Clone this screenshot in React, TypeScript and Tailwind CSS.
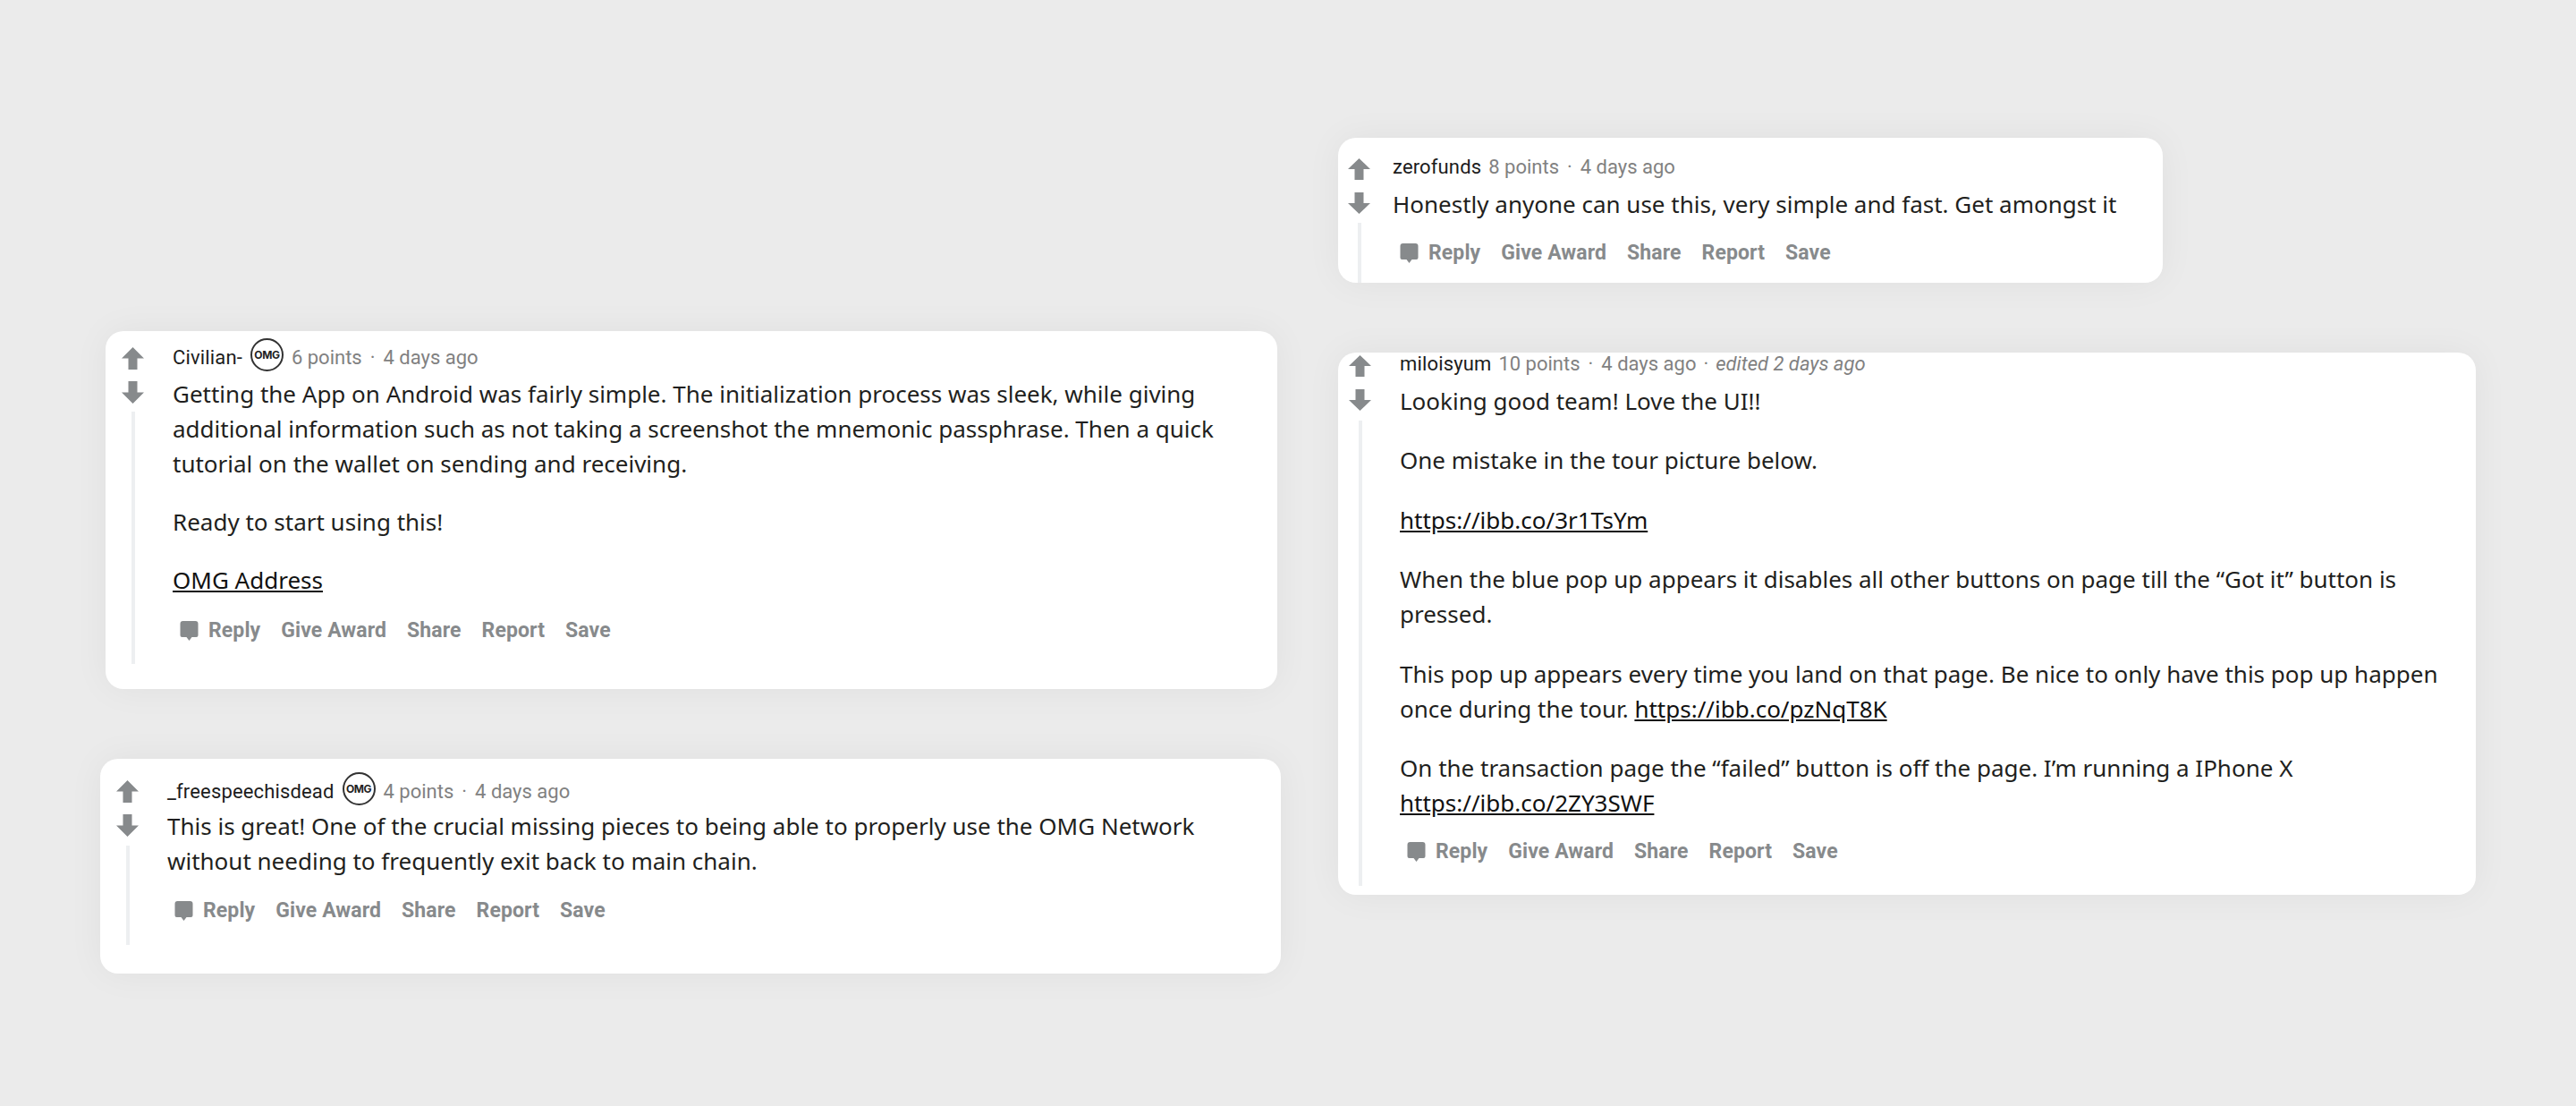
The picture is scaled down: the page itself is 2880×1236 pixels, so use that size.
const body = "font-['Noto_Sans',sans-serif] text-[26px] leading-[39px] text-[#1f1f20]";
const meta = "font-['Roboto',sans-serif] text-[22px] leading-[26px]";
const card = "flex bg-white rounded-[20px] shadow-[0_0_40px_rgba(0,0,0,0.05)]";

function Arrow({ down = false, className = "" }: { down?: boolean; className?: string }) {
  return (
    <svg viewBox="0 0 20 24" preserveAspectRatio="none" className={className}>
      <path d={down ? "M6 0h8v12h6L10 24 0 12h6z" : "M10 0l10 12h-6v12H6V12H0z"} fill="#878a8c" />
    </svg>
  );
}

function Votes({ gap, lineTop, top, h }: { gap: string; lineTop: string; top: string; h: string }) {
  return (
    <div className={`flex flex-col items-center shrink-0 self-stretch w-[25px] ${top}`}>
      <Arrow className={`w-[25px] ${h} shrink-0`} />
      <Arrow down className={`w-[25px] ${h} shrink-0 ${gap}`} />
      <div className={`w-[4px] grow bg-[#edeff1] ${lineTop}`} />
    </div>
  );
}

function Actions({ className = "" }: { className?: string }) {
  const items = ["Give Award", "Share", "Report", "Save"];
  return (
    <div className={`flex items-center gap-[23px] font-['Roboto',sans-serif] font-bold text-[23px] tracking-[0.1px] leading-[26px] text-[#878a8c] ${className}`}>
      <span className="flex items-center gap-[11px]">
        <svg viewBox="0 0 20 22" className="w-[21px] h-[22px]">
          <path d="M3 0h14a3 3 0 0 1 3 3v13a2 2 0 0 1-2 2h-5l-3 4-3-4H2a2 2 0 0 1-2-2V3a3 3 0 0 1 3-3z" fill="#878a8c" />
        </svg>
        Reply
      </span>
      {items.map((t) => (
        <span key={t}>{t}</span>
      ))}
    </div>
  );
}

function Omg() {
  return (
    <span className="inline-flex shrink-0 items-center justify-center w-[37px] h-[37px] rounded-full border-2 border-[#333] bg-white font-['Inter',sans-serif] font-bold text-[12px] tracking-[-0.4px] text-[#222] mx-[9px] -mt-[7px]">
      OMG
    </span>
  );
}

function Meta({ name, pts, badge = false, edited = false }: { name: string; pts: string; badge?: boolean; edited?: boolean }) {
  return (
    <div className={`flex items-center h-[26px] whitespace-pre ${meta}`}>
      <span className="text-[#1c1c1c] tracking-[0.15px]">{name}</span>
      {badge ? <Omg /> : <span className="w-[8px]" />}
      <span className="text-[#818181]">
        {pts}
        <span className="mx-[9px]">·</span>4 days ago
      </span>
      {edited && (
        <span className="text-[#818181]">
          <span className="mx-[8px]">·</span>
          <em>edited 2 days ago</em>
        </span>
      )}
    </div>
  );
}

const A = ({ children }: { children: string }) => <a className="underline text-[#111]">{children}</a>;

export default function App() {
  return (
    <div className="w-[2880px] h-[1236px] overflow-hidden bg-[#ebebeb] flex">
      <div className="w-[1496px] shrink-0 flex flex-col pt-[370px]">
        <div className={`${card} ml-[118px] w-[1310px] h-[400px] pl-[18px] pt-[17px] pb-[28px]`}>
          <Votes top="mt-[1px]" h="h-[25px]" gap="mt-[13px]" lineTop="mt-[9px]" />
          <div className="ml-[32px] w-[1190px]">
            <Meta name="Civilian-" pts="6 points" badge />
            <div className={`${body} mt-[8px]`}>
              <p>Getting the App on Android was fairly simple. The initialization process was sleek, while giving additional information such as not taking a screenshot the mnemonic passphrase. Then a quick tutorial on the wallet on sending and receiving.</p>
              <p className="mt-[26px]">Ready to start using this!</p>
              <p className="mt-[26px]"><A>OMG Address</A></p>
            </div>
            <Actions className="mt-[24px] ml-[8px]" />
          </div>
        </div>
        <div className={`${card} ml-[112px] mt-[78px] w-[1320px] h-[240px] pl-[18px] pt-[24px] pb-[32px]`}>
          <Votes top="mt-0" h="h-[25px]" gap="mt-[13px]" lineTop="mt-[10px]" />
          <div className="ml-[32px] w-[1190px]">
            <Meta name="_freespeechisdead" pts="4 points" badge />
            <div className={`${body} mt-[6px]`}>
              <p>This is great! One of the crucial missing pieces to being able to properly use the OMG Network without needing to frequently exit back to main chain.</p>
            </div>
            <Actions className="mt-[23px] ml-[8px]" />
          </div>
        </div>
      </div>
      <div className="flex flex-col pt-[154px]">
        <div className={`${card} w-[922px] h-[162px] pl-[11px] pt-[20px]`}>
          <Votes top="mt-[3px]" h="h-[24px]" gap="mt-[14px]" lineTop="mt-[10px]" />
          <div className="ml-[25px] w-[860px]">
            <Meta name="zerofunds" pts="8 points" />
            <div className={`${body} mt-[9px]`}>
              <p>Honestly anyone can use this, very simple and fast. Get amongst it</p>
            </div>
            <Actions className="mt-[22px] ml-[8px]" />
          </div>
        </div>
        <div className={`${card} mt-[78px] w-[1272px] h-[606px] pl-[12px] pb-[10px]`}>
          <Votes top="mt-[3px]" h="h-[24px]" gap="mt-[14px]" lineTop="mt-[11px]" />
          <div className="ml-[32px] w-[1200px]">
            <Meta name="miloisyum" pts="10 points" edited />
            <div className={`${body} mt-[9px]`}>
              <p>Looking good team! Love the UI!!</p>
              <p className="mt-[27.4px]">One mistake in the tour picture below.</p>
              <p className="mt-[27.4px]"><A>https://ibb.co/3r1TsYm</A></p>
              <p className="mt-[27.4px]">When the blue pop up appears it disables all other buttons on page till the “Got it” button is pressed.</p>
              <p className="mt-[27.4px]">This pop up appears every time you land on that page. Be nice to only have this pop up happen once during the tour. <A>https://ibb.co/pzNqT8K</A></p>
              <p className="mt-[27.4px]">On the transaction page the “failed” button is off the page. I’m running a IPhone X <A>https://ibb.co/2ZY3SWF</A></p>
            </div>
            <Actions className="mt-[22px] ml-[8px]" />
          </div>
        </div>
      </div>
    </div>
  );
}
